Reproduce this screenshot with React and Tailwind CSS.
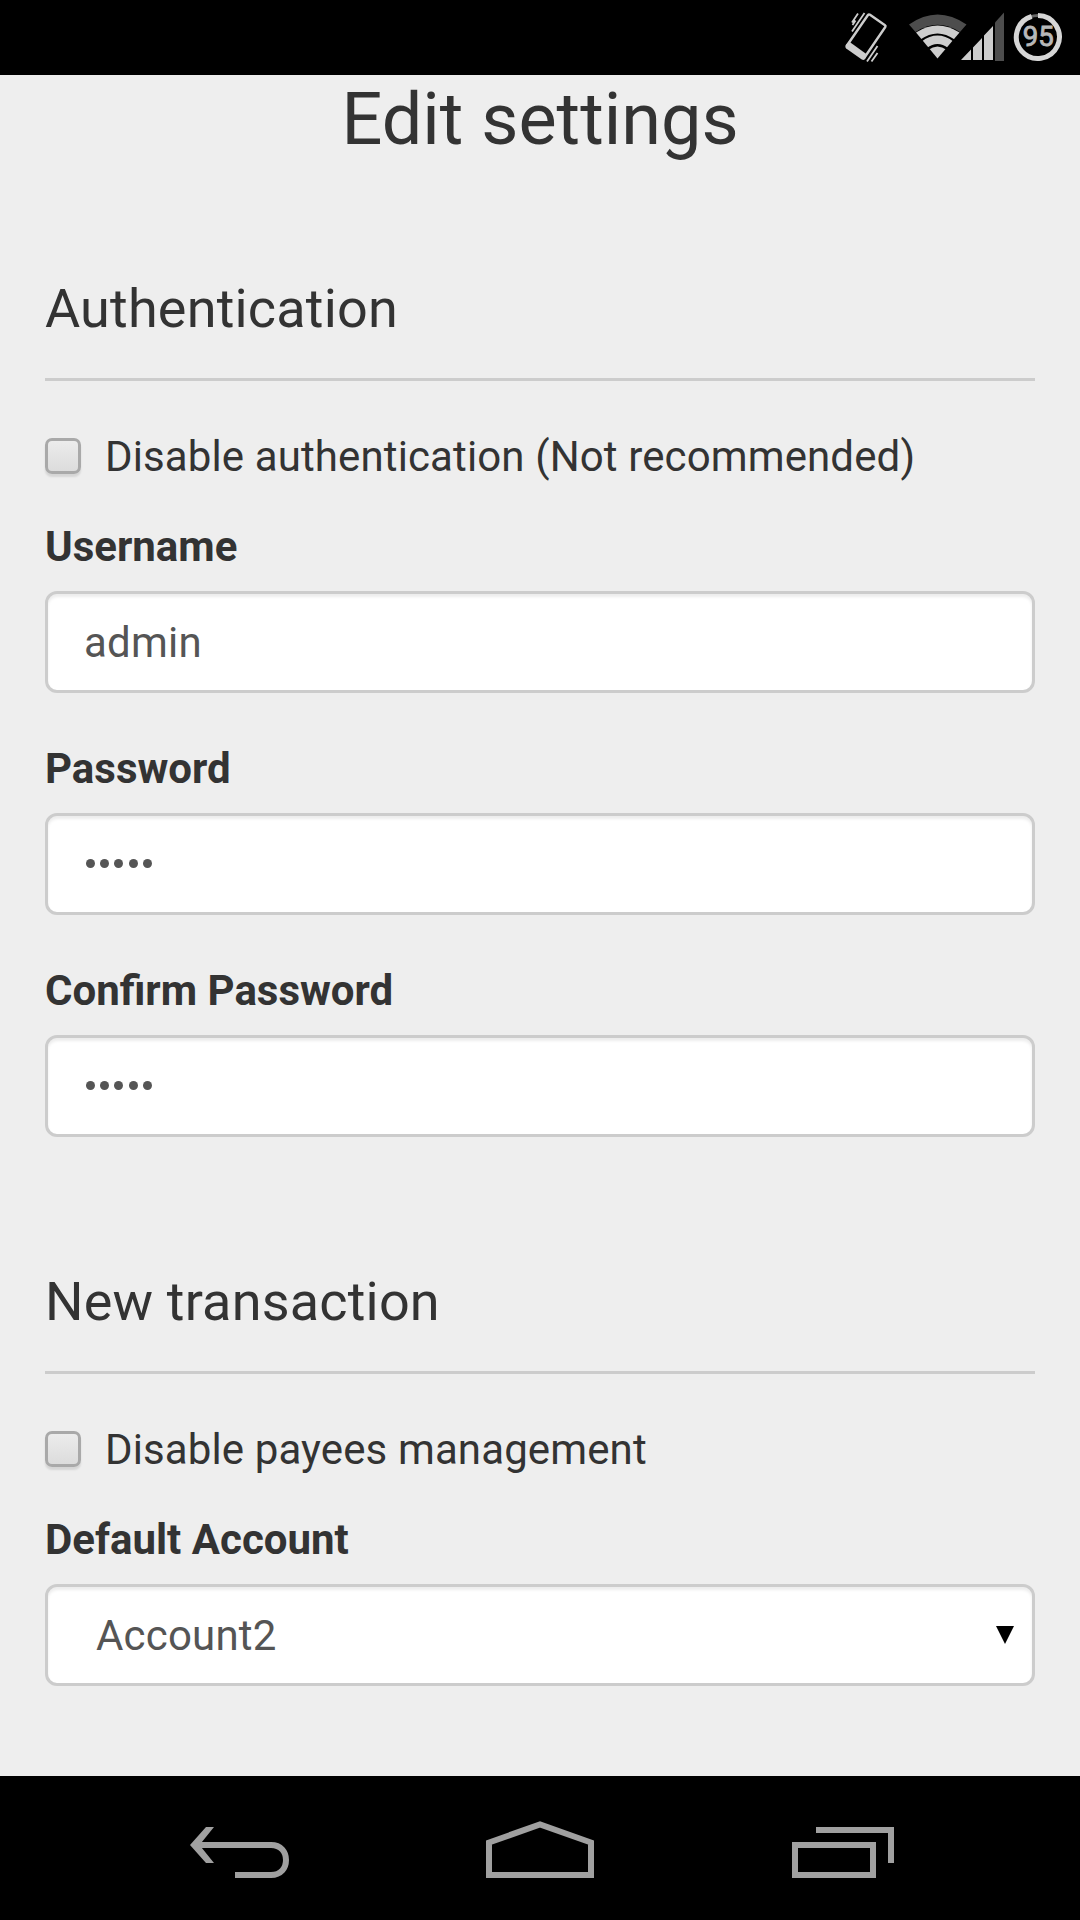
import React, { useState } from 'react';

const StatusBar = () => (
  <header className="flex h-[75px] justify-end bg-black">
    <svg width="250" height="75" viewBox="0 0 250 75" fill="none">
      {/* vibrate */}
      <path d="M40 14.700 L55 25.300 Q56 26 55.300 27 L34.500 57.500 L17 45.500 L37.800 15.300 Q38.800 13.900 40 14.700 Z" stroke="#cdcdcd" strokeWidth="2.4" strokeLinejoin="round" />
      <path d="M15.700 45 L19 41.500 L37 54.500 L35 59 Q33.800 60.800 31.800 59.600 L16.200 48.600 Q14.600 47.200 15.700 45 Z" fill="#cdcdcd" />
      <path d="M28 13.500 L22 22.500 M34.500 13 L22 31.500 M25.500 20.500 L22.500 25 M47.500 46 L37 61.500 M47.500 53 L41.500 61.500" stroke="#cdcdcd" strokeWidth="1.8" />
      {/* wifi */}
      <path d="M79 24.5 Q107.500 4.500 136.500 24.500 L130 32 Q107.500 17.500 85.500 32 Z" fill="#4d4d4d" />
      <path d="M86 32.500 Q107.500 18.500 129.500 32.500 L107.500 58.500 Z" fill="#cdcdcd" />
      <path d="M91 40.500 Q107.500 28.500 124 40.500 M97.500 49 Q107.500 41.500 117.500 49" stroke="#000" strokeWidth="2.200" />
      {/* signal */}
      <path d="M131 60 L141 49.500 V60 Z M143 47.500 L152 38 V60 H143 Z M154 35.500 L163 26 V60 H154 Z" fill="#cdcdcd" />
      <path d="M165 22.500 L174 12.500 V61 H165 Z" fill="#4d4d4d" />
      {/* battery */}
      <circle cx="208" cy="37" r="21.500" stroke="#666" strokeWidth="3" />
      <path d="M208 15.500 A21.500 21.500 0 1 1 201.700 16.400" stroke="#d6d6d6" strokeWidth="5" />
      <text x="208.200" y="46" textAnchor="middle" fill="#b8b8b8" stroke="#b8b8b8" strokeWidth="0.900" className="font-[Roboto,sans-serif] text-[28px]" textLength="31" lengthAdjust="spacingAndGlyphs">95</text>
    </svg>
  </header>
);

const Legend = ({ children }) => (
  <h2 className="border-b-[3px] border-[#cccccc] pb-[39px] text-[54px] leading-[60px] tracking-[0.18px]">{children}</h2>
);

const Checkbox = ({ label }) => {
  const [checked, setChecked] = useState(false);

  return (
    <label className="mt-[46px] flex h-[60px] items-center">
      <input
        type="checkbox"
        checked={checked}
        onChange={() => setChecked(!checked)}
        className="mb-0.5 size-9 shrink-0 appearance-none rounded-[7px] border-[3px] border-[#a9a9a9] bg-linear-to-b from-[#ececec] to-[#dcdcdc] shadow-[0_3px_2px_rgba(0,0,0,0.1)] checked:bg-gray-500"
      />
      <span className="ml-6 whitespace-nowrap tracking-[0.12px]">{label}</span>
    </label>
  );
};

const Label = ({ children, className }) => (
  <div className={`mb-[14px] font-bold ${className}`}>{children}</div>
);

const Control = ({ children, className }) => (
  <div className={`flex h-[102px] items-center rounded-[12px] border-[3px] border-[#cccccc] bg-white pt-0.5 tracking-[0.2px] text-[#555555] shadow-[inset_0_3px_3px_rgba(0,0,0,0.075)] ${className}`}>
    {children}
  </div>
);

const Dots = () => (
  <div className="-mt-1 ml-0.5 flex gap-[5.200px]">
    {[0, 1, 2, 3, 4].map((i) => (
      <span key={i} className="size-[9px] rounded-full bg-[#555555]" />
    ))}
  </div>
);

const NavBar = () => (
  <footer className="h-[144px] bg-black">
    <svg width="1080" height="144" viewBox="0 0 1080 144" fill="none" stroke="#a0a0a0" strokeWidth="6">
      <path d="M197 69 H271 C281 69 286 76 286 84 C286 92 281 99 271 99 H235" />
      <path d="M206 51 H214 L199.500 69 L214 87 H206 L190 69 Z" fill="#a0a0a0" stroke="none" />
      <path d="M489 99 V66.500 L540 48.500 L591 66.500 V99 Z" />
      <path d="M795 69 H873 V99 H795 Z M816 54 H891 V87" />
    </svg>
  </footer>
);

const App = () => {
  return (
    <div className="flex h-[1920px] w-[1080px] flex-col overflow-hidden bg-[#eeeeee] font-[Roboto,sans-serif] text-[42px] leading-[60px] text-[#333333]">
      <StatusBar />
      <main className="flex-1 px-[45px] pt-[5px]">
        <h1 className="text-center text-[72px] leading-[80px]">Edit settings</h1>

        <section className="mt-[119px]">
          <Legend>Authentication</Legend>
          <Checkbox label="Disable authentication (Not recommended)" />
          <Label className="mt-[30px]">Username</Label>
          <Control className="px-9">admin</Control>
          <Label className="mt-[46px]">Password</Label>
          <Control className="px-9"><Dots /></Control>
          <Label className="mt-[46px]">Confirm Password</Label>
          <Control className="px-9"><Dots /></Control>
        </section>

        <section className="mt-[135px]">
          <Legend>New transaction</Legend>
          <Checkbox label="Disable payees management" />
          <Label className="mt-[30px]">Default Account</Label>
          <Control className="justify-between pr-[18px] pl-12">
            <span>Account2</span>
            <svg className="mb-0.5" width="18" height="18" viewBox="0 0 18 18">
              <path d="M0 0 H18 L9 18 Z" fill="#000" />
            </svg>
          </Control>
        </section>
      </main>
      <NavBar />
    </div>
  );
};

export default App;
